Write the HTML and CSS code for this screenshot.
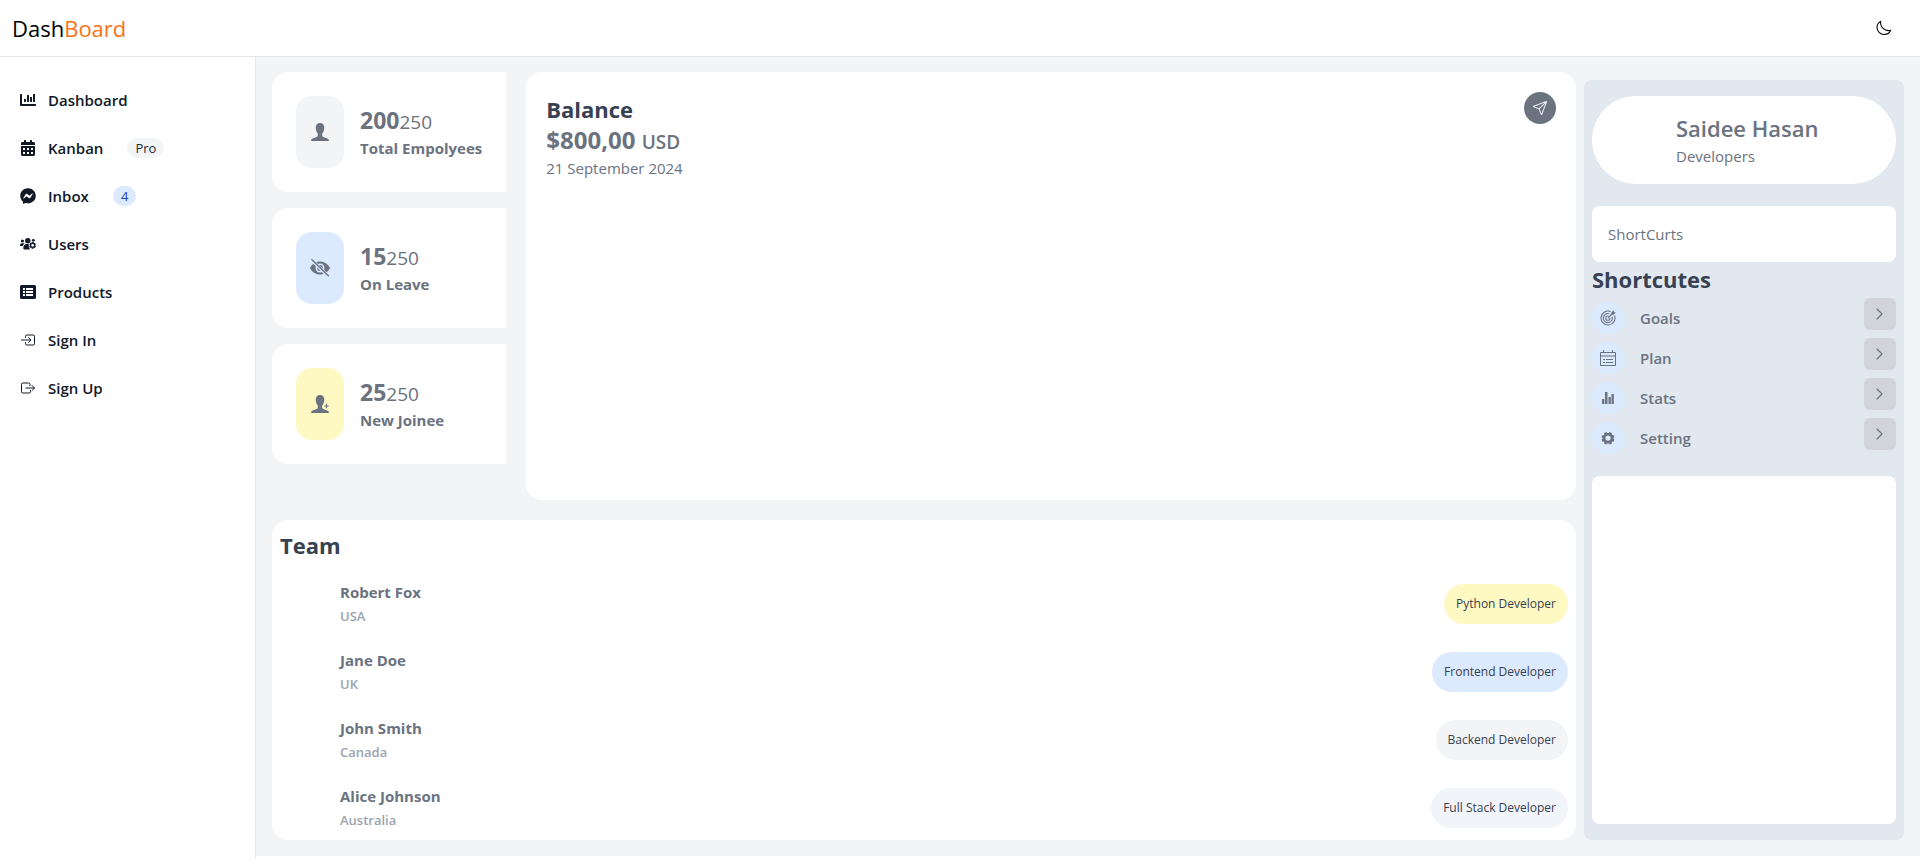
FILE: index.html
```
<!DOCTYPE html>
<html lang="en">
<head>
<meta charset="utf-8">
<title>DashBoard</title>
<link rel="stylesheet" href="styles.css">
</head>
<body>
<header class="topbar">
  <a class="brand" href="#">Dash<span class="brand-accent">Board</span></a>
  <button class="theme-toggle" type="button" aria-label="Toggle dark mode">
    <svg width="16" height="16" viewBox="0 0 16 16" fill="none" stroke="currentColor" stroke-width="1.1" stroke-linejoin="round"><path d="M4.6 1.4C2.4 2.700 1 4.900 1 7.400c0 4 3.200 7.100 7.200 7.100 3 0 5.400-1.500 6.400-4.200-5.600 1.400-10.400-2.700-10-8.900z"/></svg>
  </button>
</header>
<div class="layout">
  <nav class="sidebar" aria-label="Main">
    <ul class="nav-list">
      <li><a class="nav-link" href="#"><svg class="nav-icon" viewBox="0 0 512 512"><path d="M332.800 320h38.400c6.400 0 12.800-6.400 12.800-12.800V172.800c0-6.400-6.400-12.800-12.800-12.800h-38.400c-6.400 0-12.800 6.400-12.800 12.800v134.400c0 6.400 6.400 12.800 12.800 12.800zm96 0h38.400c6.400 0 12.800-6.400 12.800-12.800V76.800c0-6.400-6.400-12.800-12.800-12.800h-38.400c-6.400 0-12.800 6.400-12.800 12.800v230.400c0 6.400 6.400 12.800 12.800 12.800zm-288 0h38.400c6.400 0 12.800-6.400 12.800-12.800v-70.400c0-6.400-6.400-12.800-12.800-12.800h-38.400c-6.400 0-12.800 6.400-12.800 12.800v70.400c0 6.400 6.400 12.800 12.800 12.800zm96 0h38.400c6.400 0 12.800-6.400 12.800-12.800V108.800c0-6.400-6.400-12.800-12.800-12.800h-38.400c-6.400 0-12.800 6.400-12.800 12.800v198.400c0 6.400 6.400 12.800 12.800 12.800zM496 384H64V80c0-8.840-7.160-16-16-16H16C7.160 64 0 71.160 0 80v336c0 17.670 14.330 32 32 32h464c8.840 0 16-7.160 16-16v-32c0-8.840-7.160-16-16-16z"/></svg><span>Dashboard</span></a></li>
      <li><a class="nav-link" href="#"><svg class="nav-icon" viewBox="0 0 448 512"><path fill-rule="evenodd" d="M0 464c0 26.500 21.500 48 48 48h352c26.500 0 48-21.500 48-48V192H0zM64 256h64v64H64zM192 256h64v64h-64zM320 256h64v64h-64zM64 384h64v64H64zM192 384h64v64h-64zM320 384h64v64h-64zM400 64h-48V16c0-8.800-7.200-16-16-16h-32c-8.800 0-16 7.200-16 16v48H160V16c0-8.800-7.200-16-16-16h-32c-8.800 0-16 7.200-16 16v48H48C21.500 64 0 85.500 0 112v48h448v-48c0-26.500-21.500-48-48-48z"/></svg><span>Kanban</span><span class="badge badge-gray">Pro</span></a></li>
      <li><a class="nav-link" href="#"><svg class="nav-icon" viewBox="0 0 512 512"><path d="M256.550 8C116.520 8 8 110.340 8 248.570c0 72.300 29.710 134.780 78.070 177.940 8.350 7.510 6.630 11.860 8.050 58.230A19.920 19.920 0 0 0 122 502.310c52.910-23.300 53.590-25.140 62.560-22.700C337.850 521.800 504 423.700 504 248.570 504 110.340 396.590 8 256.550 8zm149.240 185.130l-73 115.570a37.370 37.370 0 0 1-53.910 9.930l-58.080-43.470a15 15 0 0 0-18 0l-78.370 59.440c-10.460 7.930-24.160-4.600-17.110-15.670l73-115.570a37.360 37.360 0 0 1 53.910-9.930l58.060 43.460a15 15 0 0 0 18 0l78.410-59.380c10.440-7.980 24.140 4.540 17.090 15.620z"/></svg><span>Inbox</span><span class="badge badge-blue">4</span></a></li>
      <li><a class="nav-link" href="#"><svg class="nav-icon" viewBox="0 0 16 16"><circle cx="2.400" cy="5" r="1.600"/><circle cx="7.800" cy="4.800" r="2.700"/><circle cx="13.300" cy="4.300" r="1.400"/><path d="M0 9.500C0 8 .8 7.200 2 7.200h1.300c.6 0 1 .2 1.400.6C3.500 8.500 3 9.200 2.900 10H0zM3.300 12.300c0-2.600 1.300-4.200 3.500-4.200h1.800c.3 1.800 0 3.200 1.400 5.300H4.400c-.7 0-1.100-.4-1.100-1.100z"/><path fill-rule="evenodd" d="M11.700 6h1.800l.3 1.200 1.200-.4.9 1.600-.9.900.9.900-.9 1.700-1.200-.4-.3 1.300h-1.800l-.3-1.300-1.200.4-.9-1.700.9-.9-.9-.9.900-1.600 1.200.4zM12.600 7.900a1.400 1.400 0 1 0 0 2.800 1.400 1.400 0 0 0 0-2.800z"/></svg><span>Users</span></a></li>
      <li><a class="nav-link" href="#"><svg class="nav-icon" viewBox="0 0 16 16"><path fill-rule="evenodd" d="M1.500 1h13A1.500 1.500 0 0 1 16 2.500v11a1.500 1.500 0 0 1-1.500 1.500h-13A1.500 1.500 0 0 1 0 13.500v-11A1.500 1.500 0 0 1 1.500 1zM3 4h2v2H3zM6 4h7v2H6zM3 7h2v2H3zM6 7h7v2H6zM3 10h2v2H3zM6 10h7v2H6z"/></svg><span>Products</span></a></li>
      <li><a class="nav-link" href="#"><svg class="nav-icon nav-icon-line" viewBox="0 0 512 512"><path d="M176 176v-40a40 40 0 0 1 40-40h208a40 40 0 0 1 40 40v240a40 40 0 0 1-40 40H216a40 40 0 0 1-40-40v-40M272 336l80-80-80-80M48 256h288"/></svg><span>Sign In</span></a></li>
      <li><a class="nav-link" href="#"><svg class="nav-icon nav-icon-line" viewBox="0 0 512 512"><path d="M320 176v-40a40 40 0 0 0-40-40H88a40 40 0 0 0-40 40v240a40 40 0 0 0 40 40h208a40 40 0 0 0 40-40v-40M384 176l80 80-80 80M191 256h273"/></svg><span>Sign Up</span></a></li>
    </ul>
  </nav>
  <main class="content">
    <div class="primary">
      <div class="overview">
        <div class="stats">
          <section class="stat">
            <div class="stat-icon tone-gray"><svg width="20" height="20" viewBox="0 0 20 20" fill="currentColor"><path d="M10 1c-2.700 0-4.300 1.800-4.300 4.500 0 2.400.8 4.500 2 5.900.5 1.800.1 3-1 3.500C4.500 15.900 1.200 16 1 19h18c-.2-3-3.500-3.100-5.700-4.100-1.100-.5-1.500-1.700-1-3.500 1.200-1.400 2-3.500 2-5.900C14.300 2.800 12.700 1 10 1z"/></svg></div>
            <div><p class="stat-value"><strong>200</strong>250</p><p class="stat-label">Total Empolyees</p></div>
          </section>
          <section class="stat">
            <div class="stat-icon tone-blue"><svg width="22" height="20" viewBox="0 0 22 20"><path fill="currentColor" fill-rule="evenodd" d="M1 10c2-4 5.700-6.500 10-6.500S19 6 21 10c-2 4-5.700 6.500-10 6.500S3 14 1 10zm10-4.500a4.500 4.500 0 1 0 0 9 4.500 4.500 0 0 0 0-9z"/><circle cx="11" cy="10" r="2.900" fill="currentColor"/><path d="M2.800 2.200l16.400 16" stroke="#dbeafe" stroke-width="3.200"/><path d="M2.500 1.300l17.300 17" stroke="currentColor" stroke-width="1.300"/></svg></div>
            <div><p class="stat-value"><strong>15</strong>250</p><p class="stat-label">On Leave</p></div>
          </section>
          <section class="stat">
            <div class="stat-icon tone-yellow"><svg width="20" height="20" viewBox="0 0 20 20" fill="currentColor"><path d="M10 1c-2.700 0-4.300 1.800-4.300 4.500 0 2.400.8 4.500 2 5.900.5 1.800.1 3-1 3.500C4.500 15.900 1.200 16 1 19h18c-.2-3-3.500-3.100-5.700-4.100-1.100-.5-1.500-1.700-1-3.500 1.200-1.400 2-3.500 2-5.900C14.300 2.800 12.700 1 10 1z"/><path d="M16.500 9.500v5M14 12h5" stroke="#fef9c3" stroke-width="3"/><path d="M16.500 9.800v4.400M14.300 12h4.400" stroke="currentColor" stroke-width="1.200"/></svg></div>
            <div><p class="stat-value"><strong>25</strong>250</p><p class="stat-label">New Joinee</p></div>
          </section>
        </div>
        <section class="balance">
          <div>
            <h2 class="heading">Balance</h2>
            <p class="amount"><strong>$800,00</strong> <span class="currency">USD</span></p>
            <p class="date">21 September 2024</p>
          </div>
          <button class="send" type="button" aria-label="Send"><svg width="16" height="16" viewBox="0 0 512 512" fill="none" stroke="currentColor" stroke-width="36" stroke-linejoin="round" stroke-linecap="round"><path d="M53.120 199.940l400-151.390a8 8 0 0 1 10.330 10.330l-151.390 400a8 8 0 0 1-15-.34l-67.400-166.090a16 16 0 0 0-10.110-10.110L53.460 215a8 8 0 0 1-.34-15.060zM460 52L227 285"/></svg></button>
        </section>
      </div>
      <section class="team">
        <h2 class="heading">Team</h2>
        <ul class="members">
          <li class="member"><div><p class="member-name">Robert Fox</p><p class="member-place">USA</p></div><span class="role tone-yellow">Python Developer</span></li>
          <li class="member"><div><p class="member-name">Jane Doe</p><p class="member-place">UK</p></div><span class="role tone-blue">Frontend Developer</span></li>
          <li class="member"><div><p class="member-name">John Smith</p><p class="member-place">Canada</p></div><span class="role tone-gray">Backend Developer</span></li>
          <li class="member"><div><p class="member-name">Alice Johnson</p><p class="member-place">Australia</p></div><span class="role tone-slate">Full Stack Developer</span></li>
        </ul>
      </section>
    </div>
    <aside class="panel">
      <section class="profile">
        <div><h2 class="profile-name">Saidee Hasan</h2><p class="profile-role">Developers</p></div>
      </section>
      <p class="note">ShortCurts</p>
      <h2 class="heading">Shortcutes</h2>
      <ul class="shortcuts">
        <li class="shortcut"><span class="shortcut-icon"><svg width="16" height="16" viewBox="0 0 16 16" fill="none" stroke="currentColor" stroke-width="1.100"><path d="M10.600 1.500A7 7 0 1 0 14.600 5.600M9.200 3.800A4.500 4.500 0 1 0 12.200 7M8.300 6.100A2.100 2.100 0 1 0 9.900 7.900M8 8l4-4"/><path fill="currentColor" d="M11.500 4.500l.2-2 1.700-1.700.5 1.400 1.400.5-1.700 1.700z" stroke-width=".6"/></svg></span><span class="shortcut-name">Goals</span><button class="go" type="button" aria-label="Open Goals"><svg width="14" height="14" viewBox="0 0 14 14"><path d="M4 2l5 5-5 5"/></svg></button></li>
        <li class="shortcut"><span class="shortcut-icon"><svg width="16" height="16" viewBox="0 0 16 16" fill="none" stroke="currentColor" stroke-width="1"><path d="M.5 2.500h15v13H.5zM.5 6h15M3.500 0v3M12.500 0v3"/><path d="M3 9.500h2M6 9.500h7M3 12.500h2M6 12.500h7"/></svg></span><span class="shortcut-name">Plan</span><button class="go" type="button" aria-label="Open Plan"><svg width="14" height="14" viewBox="0 0 14 14"><path d="M4 2l5 5-5 5"/></svg></button></li>
        <li class="shortcut"><span class="shortcut-icon"><svg width="16" height="16" viewBox="0 0 16 16" fill="currentColor"><path d="M2 9h2.300v5H2zM5 2h2.500v12H5zM8.500 7h2.300v7H8.500zM11.500 4h2.300v10h-2.300z"/></svg></span><span class="shortcut-name">Stats</span><button class="go" type="button" aria-label="Open Stats"><svg width="14" height="14" viewBox="0 0 14 14"><path d="M4 2l5 5-5 5"/></svg></button></li>
        <li class="shortcut"><span class="shortcut-icon"><svg width="16" height="16" viewBox="0 0 16 16" fill="currentColor"><path fill-rule="evenodd" d="M6.300 2l.8 1h1.800l.8-1 2.100.9-.2 1.300 1.100 1.100 1.300-.1.400 1.900-1 .8v.9l1 .8-.6 1.900-1.300-.1-.9 1 .2 1.300-2.100.8-.8-1H7.100l-.8 1-2.100-.8.2-1.300-.9-1-1.300.1-.6-1.900 1-.8V8l-1-.8L2 5.300l1.300.1 1.100-1.200-.2-1.300zM8 5.500a2.600 2.600 0 1 0 0 5.200 2.600 2.600 0 0 0 0-5.200z"/></svg></span><span class="shortcut-name">Setting</span><button class="go" type="button" aria-label="Open Setting"><svg width="14" height="14" viewBox="0 0 14 14"><path d="M4 2l5 5-5 5"/></svg></button></li>
      </ul>
      <div class="blank"></div>
    </aside>
  </main>
</div>
</body>
</html>
```
FILE: styles.css
```
* { box-sizing: border-box; }
body, h2, p, ul { margin: 0; padding: 0; }
ul { list-style: none; }
a { color: inherit; text-decoration: none; }
button { border: 0; padding: 0; font: inherit; cursor: pointer; }
svg { display: block; }

body {
  display: flex;
  flex-direction: column;
  min-height: 100vh;
  background: #fff;
  color: #6b7280;
  font-family: "Segoe UI", "Open Sans", "Noto Sans", sans-serif;
  font-size: 15px;
  line-height: 24px;
}

.topbar {
  display: flex;
  align-items: center;
  justify-content: space-between;
  padding: 12px 28px 12px 12px;
  border-bottom: 1px solid #e5e7eb;
}
.brand { color: #000; font-size: 22px; line-height: 32px; }
.brand-accent { color: #f97316; }
.theme-toggle { background: none; color: #000; }

.layout { display: flex; flex: 1; }
.sidebar {
  flex: 0 0 256px;
  padding: 23px 12px 16px;
  border-right: 1px solid #e5e7eb;
}
.nav-list { display: grid; gap: 8px; }
.nav-link {
  display: flex;
  align-items: center;
  padding: 8px;
  color: #111827;
  font-weight: 600;
}
.nav-icon { width: 16px; height: 16px; margin-right: 12px; fill: currentColor; }
.nav-icon-line { fill: none; stroke: currentColor; stroke-width: 32; stroke-linecap: round; stroke-linejoin: round; }
.badge {
  margin-left: 24px;
  padding: 0 8px;
  border-radius: 10px;
  font-size: 13px;
  font-weight: 500;
  line-height: 20px;
}
.badge-gray { background: #f3f4f6; color: #1f2937; }
.badge-blue { background: #dbeafe; color: #1e40af; }

.content {
  display: flex;
  flex: 1;
  gap: 8px;
  align-self: flex-start;
  padding: 15px 16px 16px;
  background: #f3f4f6;
}
.primary { display: grid; flex: 1; gap: 20px; }
.overview { display: flex; gap: 20px; min-height: 428px; }
.stats { display: grid; flex: 0 0 234px; gap: 16px; align-content: start; }
.stat {
  display: flex;
  align-items: center;
  gap: 16px;
  padding: 24px;
  border-radius: 16px 0 0 16px;
  background: #fff;
}
.stat-icon {
  display: grid;
  place-items: center;
  width: 48px;
  height: 72px;
  border-radius: 16px;
}
.stat-value { padding-top: 2px; font-size: 19px; line-height: 28px; }
.stat-value strong { font-size: 23px; }
.stat-label { font-weight: 700; white-space: nowrap; }

.tone-gray { background: #f3f4f6; }
.tone-blue { background: #dbeafe; }
.tone-yellow { background: #fef9c3; }
.tone-slate { background: #f1f5f9; }

.balance {
  display: flex;
  flex: 1;
  align-items: flex-start;
  justify-content: space-between;
  padding: 20px;
  border-radius: 16px;
  background: #fff;
}
.heading { color: #374151; font-size: 22px; font-weight: 700; line-height: 34px; }
.amount { font-size: 24px; line-height: 28px; }
.currency { font-size: 19px; font-weight: 600; }
.send {
  display: grid;
  place-items: center;
  width: 32px;
  height: 32px;
  border-radius: 50%;
  background: #6b7280;
  color: #e5e7eb;
}

.team { padding: 8px 8px 6px; border-radius: 16px; background: #fff; }
.members { display: grid; gap: 16px; margin-top: 16px; }
.member {
  display: flex;
  align-items: center;
  justify-content: space-between;
  min-height: 52px;
  padding-left: 60px;
}
.member-name { font-weight: 700; }
.member-place { color: #9ca3af; font-size: 13px; font-weight: 600; }
.role {
  padding: 8px 12px;
  border-radius: 20px;
  color: #374151;
  font-size: 12px;
  font-weight: 500;
}

.panel {
  display: flex;
  flex: 0 0 320px;
  flex-direction: column;
  margin-top: 8px;
  padding: 16px 8px;
  border-radius: 8px;
  background: #e2e8f0;
}
.profile {
  padding: 16px 16px 16px 84px;
  border-radius: 44px;
  background: #fff;
}
.profile-name { font-size: 22px; font-weight: 600; line-height: 32px; }
.note { margin-top: 22px; padding: 16px; border-radius: 8px; background: #fff; }
.shortcuts { display: grid; gap: 4px; margin-top: 2px; }
.shortcut { display: flex; align-items: flex-end; height: 36px; }
.shortcut-icon {
  display: grid;
  place-items: center;
  width: 32px;
  height: 32px;
  border-radius: 50%;
  background: #dbeafe;
}
.shortcut-name { flex: 1; margin-left: 16px; line-height: 32px; font-weight: 600; }
.go {
  display: grid;
  place-items: center;
  align-self: flex-start;
  width: 32px;
  height: 32px;
  border-radius: 6px;
  background: #d1d5db;
  color: #6b7280;
}
.go svg { fill: none; stroke: currentColor; stroke-width: 1.2; stroke-linecap: round; stroke-linejoin: round; }
.blank { flex: 1; margin-top: 22px; border-radius: 8px; background: #fff; }
```
